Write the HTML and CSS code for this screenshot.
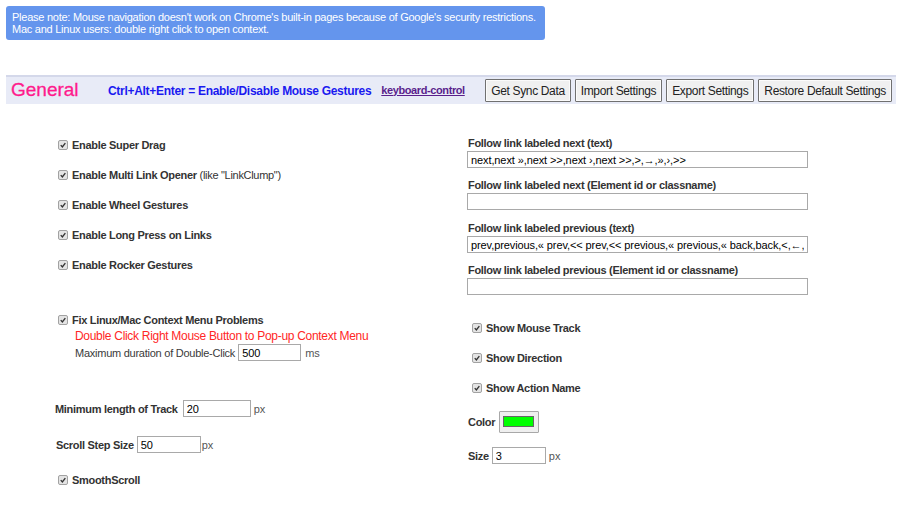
FILE: index.html
```html
<!DOCTYPE html>
<html>
<head>
<meta charset="utf-8">
<title>Options</title>
<link rel="stylesheet" href="styles.css">
</head>
<body>
<div class="notice">Please note: Mouse navigation doesn't work on Chrome's built-in pages because of Google's security restrictions.<br>Mac and Linux users: double right click to open context.</div>

<div class="bar">
  <span class="title">General</span>
  <span class="hotkey">Ctrl+Alt+Enter = Enable/Disable Mouse Gestures</span>
  <a class="kbd-link" href="#">keyboard-control</a>
  <div class="actions">
    <button class="btn">Get Sync Data</button>
    <button class="btn">Import Settings</button>
    <button class="btn">Export Settings</button>
    <button class="btn">Restore Default Settings</button>
  </div>
</div>

<div class="main">
  <div class="col left">
    <label class="check"><span class="cb"><svg viewBox="0 0 10 10"><path d="M2.2 5.2 L4.2 7.4 L7.9 2.6"/></svg></span>Enable Super Drag</label>
    <label class="check"><span class="cb"><svg viewBox="0 0 10 10"><path d="M2.2 5.2 L4.2 7.4 L7.9 2.6"/></svg></span>Enable Multi Link Opener&nbsp;<span class="normal">(like "LinkClump")</span></label>
    <label class="check"><span class="cb"><svg viewBox="0 0 10 10"><path d="M2.2 5.2 L4.2 7.4 L7.9 2.6"/></svg></span>Enable Wheel Gestures</label>
    <label class="check"><span class="cb"><svg viewBox="0 0 10 10"><path d="M2.2 5.2 L4.2 7.4 L7.9 2.6"/></svg></span>Enable Long Press on Links</label>
    <label class="check"><span class="cb"><svg viewBox="0 0 10 10"><path d="M2.2 5.2 L4.2 7.4 L7.9 2.6"/></svg></span>Enable Rocker Gestures</label>

    <div class="fix">
      <label class="check short"><span class="cb"><svg viewBox="0 0 10 10"><path d="M2.2 5.2 L4.2 7.4 L7.9 2.6"/></svg></span>Fix Linux/Mac Context Menu Problems</label>
      <div class="red-note">Double Click Right Mouse Button to Pop-up Context Menu</div>
      <div class="sub-row"><span>Maximum duration of Double-Click</span><input class="field w-dur" type="text" value="500"><span class="unit u-ms">ms</span></div>
    </div>

    <div class="field-row track"><span>Minimum length of Track</span><input class="field w-track" type="text" value="20"><span class="unit">px</span></div>
    <div class="field-row step"><span>Scroll Step Size</span><input class="field w-step" type="text" value="50"><span class="unit">px</span></div>
    <label class="check short smooth"><span class="cb"><svg viewBox="0 0 10 10"><path d="M2.2 5.2 L4.2 7.4 L7.9 2.6"/></svg></span>SmoothScroll</label>
  </div>

  <div class="col right">
    <div class="group">
      <div class="flabel">Follow link labeled next (text)</div>
      <input class="field wide" type="text" value="next,next »,next >>,next ›,next >>,>,→,»,›,>>">
    </div>
    <div class="group">
      <div class="flabel">Follow link labeled next (Element id or classname)</div>
      <input class="field wide" type="text" value="">
    </div>
    <div class="group">
      <div class="flabel">Follow link labeled previous (text)</div>
      <input class="field wide" type="text" value="prev,previous,« prev,<< prev,<< previous,« previous,« back,back,<,←,«,‹,<<">
    </div>
    <div class="group">
      <div class="flabel">Follow link labeled previous (Element id or classname)</div>
      <input class="field wide" type="text" value="">
    </div>

    <div class="checks">
      <label class="check"><span class="cb"><svg viewBox="0 0 10 10"><path d="M2.2 5.2 L4.2 7.4 L7.9 2.6"/></svg></span>Show Mouse Track</label>
      <label class="check"><span class="cb"><svg viewBox="0 0 10 10"><path d="M2.2 5.2 L4.2 7.4 L7.9 2.6"/></svg></span>Show Direction</label>
      <label class="check"><span class="cb"><svg viewBox="0 0 10 10"><path d="M2.2 5.2 L4.2 7.4 L7.9 2.6"/></svg></span>Show Action Name</label>
    </div>

    <div class="color-row"><span>Color</span><span class="swatch"><span class="swatch-fill"></span></span></div>
    <div class="size-row"><span>Size</span><input class="field w-size" type="text" value="3"><span class="unit">px</span></div>
  </div>
</div>
</body>
</html>
```

FILE: styles.css
```css
* { box-sizing: border-box; }

body {
  margin: 0;
  padding: 6px 4px 6px 6px;
  font-family: "Liberation Sans", Arial, sans-serif;
  color: #333;
  background: #fff;
}

.notice {
  width: fit-content;
  background: #6495ed;
  color: #fff;
  font-size: 11px;
  letter-spacing: -0.25px;
  line-height: 12px;
  padding: 5px 9px 5px 6px;
  border-radius: 3px;
}

.bar {
  margin-top: 35px;
  height: 29px;
  display: flex;
  align-items: center;
  background: #e8ebf7;
  border-top: 2px solid #d4d8ea;
  padding: 0 4px 0 5px;
}

.title {
  width: 97px;
  flex: none;
  color: #ff1a8c;
  font-size: 19px;
  margin-top: -2px;
  -webkit-text-stroke: 0.3px #ff1a8c;
}

.hotkey {
  color: #1a1af0;
  font-weight: bold;
  font-size: 12px;
  letter-spacing: -0.3px;
  margin-right: 10px;
}

.kbd-link {
  color: #5a1f8c;
  font-weight: bold;
  font-size: 11px;
  letter-spacing: -0.4px;
  text-decoration: underline;
  margin-top: -2px;
}

.actions {
  margin-left: auto;
  display: flex;
  gap: 4px;
}

.btn {
  height: 23px;
  margin: 0;
  padding: 0 5px;
  font-family: "Liberation Sans", Arial, sans-serif;
  font-size: 12px;
  letter-spacing: -0.35px;
  color: #222;
  background: #f0f0f0;
  border: 1px solid #707070;
  box-shadow: inset 0 0 0 1px #fbfbfb;
  border-radius: 1px;
}

.main {
  display: grid;
  grid-template-columns: 413px 1fr;
  padding-left: 49px;
}

.left { padding-top: 26px; }
.right { padding-top: 33px; }

.check {
  display: flex;
  align-items: center;
  height: 30px;
  font-weight: bold;
  font-size: 11px;
  letter-spacing: -0.3px;
  color: #333;
}

.check.short { height: 16px; }

.normal { font-weight: normal; }

.cb {
  width: 10px;
  height: 10px;
  flex: none;
  margin: 0 4px 0 3px;
  border: 1px solid #a2a2a2;
  border-radius: 2px;
  background: #e4e4e4;
  display: flex;
}

.cb svg {
  width: 8px;
  height: 8px;
}

.cb path {
  fill: none;
  stroke: #333;
  stroke-width: 1.7;
}

.fix { margin-top: 32px; }

.red-note {
  color: #ff2626;
  font-size: 12px;
  letter-spacing: -0.3px;
  line-height: 16px;
  padding-left: 20px;
}

.sub-row {
  display: flex;
  align-items: center;
  height: 17px;
  padding-left: 20px;
  font-size: 11px;
  letter-spacing: -0.25px;
  color: #3a3a3a;
}

.field {
  height: 17px;
  border: 1px solid #a9a9a9;
  padding: 0 3px;
  font-family: "Liberation Sans", Arial, sans-serif;
  font-size: 11px;
  letter-spacing: -0.1px;
  color: #000;
  background: #fff;
  outline: none;
}

.w-dur { width: 63px; margin: 0 4px 0 3px; }
.w-track { width: 68px; margin: 0 3px 0 5px; }
.w-step { width: 64px; margin: 0 1px 0 3px; }
.w-size { width: 54px; margin: 0 3px 0 3px; }
.wide { width: 341px; display: block; margin-left: -1px; }

.unit {
  font-weight: normal;
  color: #555;
  font-size: 11px;
  letter-spacing: 0;
}

.field-row {
  display: flex;
  align-items: center;
  height: 17px;
  font-weight: bold;
  font-size: 11px;
  letter-spacing: -0.3px;
  color: #333;
}

.track { margin-top: 39px; }
.step { margin-top: 19px; margin-left: 1px; }
.smooth { margin-top: 19px; }

.group + .group { margin-top: 11px; }
.group:nth-child(3) { margin-top: 12px; }

.flabel {
  font-weight: bold;
  font-size: 11px;
  line-height: 13px;
  letter-spacing: -0.3px;
  margin-bottom: 1px;
  color: #333;
}

.checks { margin-top: 18px; }
.checks .cb { margin-left: 4px; }

.color-row {
  margin-top: 8px;
  display: flex;
  align-items: center;
  height: 22px;
  font-weight: bold;
  font-size: 11px;
  letter-spacing: -0.3px;
}

.swatch {
  width: 40px;
  height: 22px;
  margin-left: 4px;
  padding: 4px 4px 5px 3px;
  background: #efefef;
  border: 1px solid #a8a8a8;
  border-radius: 1px;
  display: flex;
}

.swatch-fill {
  flex: 1;
  background: #00ff00;
  border: 1px solid #666;
}

.size-row {
  margin-top: 14px;
  display: flex;
  align-items: center;
  height: 17px;
  font-weight: bold;
  font-size: 11px;
  letter-spacing: -0.3px;
}
```
